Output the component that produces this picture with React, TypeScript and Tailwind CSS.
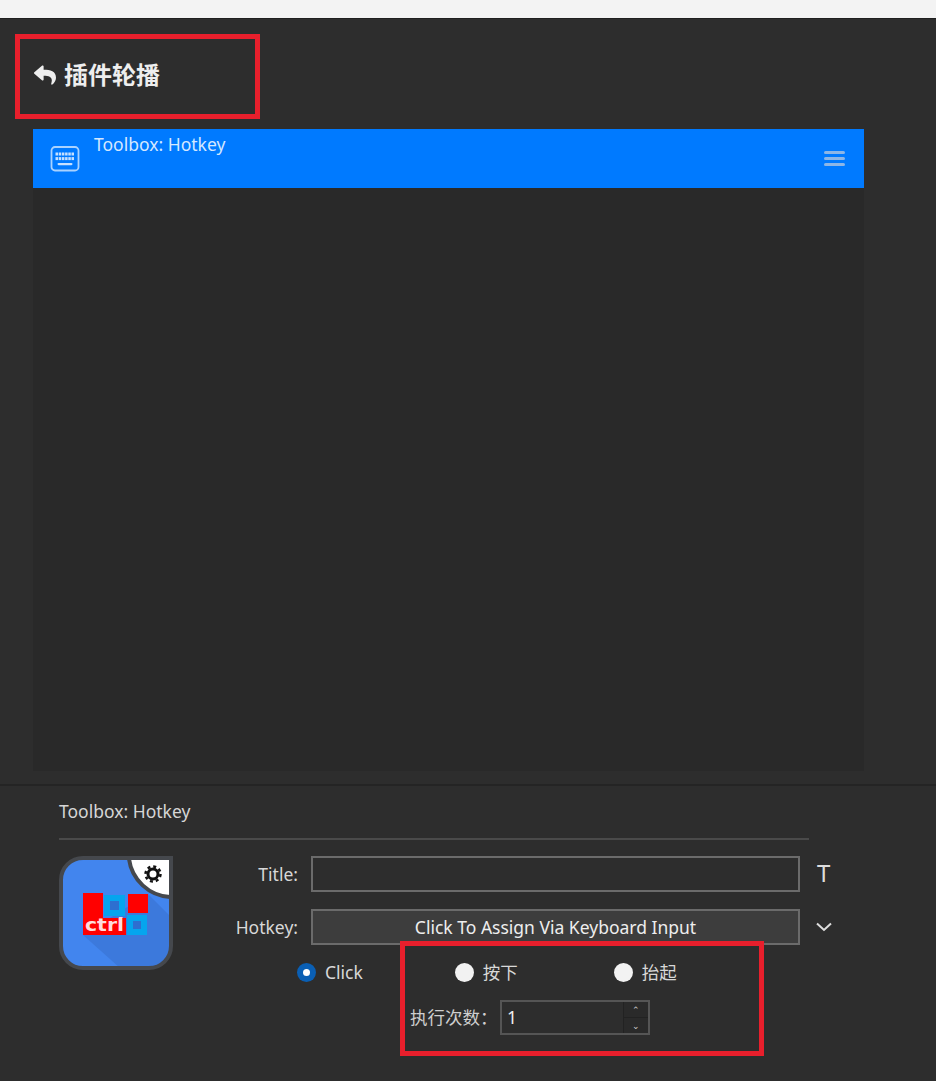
import { FaReply } from "react-icons/fa";

const font = "font-['Noto_Sans','Noto_Sans_CJK_SC',sans-serif]";

const tileOutline = "M24 2 H112 V90 A22 22 0 0 1 90 112 H24 A22 22 0 0 1 2 90 V24 A22 22 0 0 1 24 2 Z";

function KeyboardIcon() {
  const keys = [];
  for (let r = 0; r < 2; r++) {
    for (let c = 0; c < 6; c++) {
      keys.push(<rect key={`${r}-${c}`} x={5.5 + c * 3.2} y={8.5 + r * 4.6} width="2.5" height="3" fill="#c6e0ff" />);
    }
  }
  return (
    <svg width="30" height="30" viewBox="0 0 30 30" fill="none">
      <rect x="1.5" y="3" width="27" height="23.5" rx="3.5" stroke="#a9d2ff" strokeWidth="1.8" />
      {keys}
      <rect x="7.5" y="19" width="15" height="2.2" rx="1.1" fill="#c6e0ff" />
    </svg>
  );
}

function PluginIcon() {
  return (
    <svg width="114" height="114" viewBox="0 0 114 114">
      <defs>
        <clipPath id="tile">
          <path d={tileOutline} />
        </clipPath>
      </defs>
      <g clipPath="url(#tile)">
        <rect width="114" height="114" fill="#4285ee" />
        <path d="M24 79 L61 112 L112 112 L112 61 L89 38 Z" fill="#3c79dc" />
        <path d="M24 37 H44 V62 H67 V79 H24 Z" fill="#ff0000" />
        <rect x="45" y="39" width="21" height="21" fill="#05a5ee" />
        <rect x="51" y="45" width="9" height="9" fill="#2d6fd0" />
        <rect x="69" y="38" width="20" height="19" fill="#ff0000" />
        <rect x="68" y="59" width="20" height="20" fill="#05a5ee" />
        <rect x="74" y="65" width="8" height="8" fill="#2d6fd0" />
        <text x="26" y="75" fontFamily="'DejaVu Sans', sans-serif" fontWeight="bold" fontSize="18" textLength="39" lengthAdjust="spacingAndGlyphs" fill="#ffdcdc">
          ctrl
        </text>
      </g>
      <path d="M70 3 A44 44 0 0 0 111 41 V3 Z" fill="#ffffff" />
      <path d="M70 3 A44 44 0 0 0 111 41" fill="none" stroke="#45484d" strokeWidth="4" />
      <path d={tileOutline} fill="none" stroke="#45484d" strokeWidth="4" />
      <g transform="translate(94 18)" fill="none" stroke="#111111">
        <circle r="5" strokeWidth="3" />
        <circle r="7.500" strokeWidth="2.500" strokeDasharray="3 2.890" />
      </g>
    </svg>
  );
}

function Radio({ checked, label, className }: { checked?: boolean; label: string; className: string }) {
  return (
    <div className={`flex items-center gap-[9px] ${className}`}>
      {checked ? (
        <span className="flex h-[19px] w-[19px] items-center justify-center rounded-full bg-[#0a5fb4]">
          <span className="h-[7px] w-[7px] rounded-full bg-white" />
        </span>
      ) : (
        <span className="h-[19px] w-[19px] rounded-full bg-[#f2f2f2]" />
      )}
      <span className="text-[17.5px] leading-[24px] text-[#d8d8d8]">{label}</span>
    </div>
  );
}

export default function App() {
  return (
    <div className={`relative flex h-[1081px] w-[936px] flex-col overflow-hidden bg-[#2d2d2d] ${font}`}>
      <div className="h-[18px] shrink-0 bg-[#f3f3f3]" />
      <div className="h-px shrink-0 bg-[#1f1f1f]" />

      {/* Title */}
      <div className="flex h-[110px] shrink-0 items-center gap-[8px] pl-[34px] pt-[2px]">
        <FaReply className="text-[22px] text-[#eeeeee]" />
        <span className="text-[24px] font-bold text-[#eeeeee]">插件轮播</span>
      </div>

      {/* Action list */}
      <div className="ml-[33px] h-[642px] w-[831px] shrink-0 bg-[#292929]">
        <div className="flex h-[59px] items-start bg-[#007aff] pl-[17px] pr-[19px]">
          <div className="mt-[15px]">
            <KeyboardIcon />
          </div>
          <span className="ml-[14px] mt-[2px] text-[17.5px] leading-[26px] text-[#d4e8ff]">Toolbox: Hotkey</span>
          <div className="ml-auto mt-[22px] flex w-[21px] flex-col gap-[3px]">
            <span className="h-[3px] rounded-sm bg-[#8db6e6]" />
            <span className="h-[3px] rounded-sm bg-[#8db6e6]" />
            <span className="h-[3px] rounded-sm bg-[#8db6e6]" />
          </div>
        </div>
      </div>

      {/* Settings panel */}
      <div className="mt-[13px] flex-1 border-t-2 border-[#242424] pl-[59px]">
        <div className="flex h-[54px] w-[750px] items-center border-b-2 border-[#4a4a4a] pb-[2px] text-[17.5px] text-[#d6d6d6]">
          Toolbox: Hotkey
        </div>
        <div className="mt-[16px] flex">
          <PluginIcon />
          <div className="ml-[58px] flex w-[600px] flex-col">
            <div className="flex items-center">
              <span className="flex w-[67px] shrink-0 justify-end whitespace-nowrap text-[17.5px] text-[#d8d8d8]">Title:</span>
              <div className="ml-[13px] h-[36px] w-[489px] shrink-0 border-2 border-[#6b6b6b]" />
              <span className="ml-[17px] pb-[2px] text-[24px] leading-none text-[#dddddd]">T</span>
            </div>
            <div className="mt-[17px] flex items-center">
              <span className="flex w-[67px] shrink-0 justify-end whitespace-nowrap text-[17.5px] text-[#d8d8d8]">Hotkey:</span>
              <div className="ml-[13px] flex h-[36px] w-[489px] shrink-0 items-center justify-center border-2 border-[#6b6b6b] bg-[#3d3d3d] text-[17.5px] text-[#eeeeee]">
                Click To Assign Via Keyboard Input
              </div>
              <svg className="ml-[15px] shrink-0" width="18" height="12" viewBox="0 0 18 12" fill="none">
                <path d="M2 2.500 L9 9 L16 2.500" stroke="#dddddd" strokeWidth="2" />
              </svg>
            </div>
            <div className="mt-[15px] flex h-[24px] items-center">
              <Radio checked label="Click" className="ml-[66px]" />
              <Radio label="按下" className="ml-[92px]" />
              <Radio label="抬起" className="ml-[96px]" />
            </div>
            <div className="mt-[16px] flex items-center">
              <span className="ml-[179px] w-[90px] shrink-0 whitespace-nowrap text-[17.5px] text-[#cfcfcf]">执行次数：</span>
              <div className="flex h-[35px] w-[150px] shrink-0 items-center justify-between border-2 border-[#555555] pl-[5px] text-[17.5px] text-[#eeeeee]">
                1
                <div className="flex h-full w-[25px] flex-col border-l border-[#222222] bg-[#2a2a2a] text-center text-[9px] leading-[15px] text-[#cccccc]">
                  <span className="h-1/2 border-b border-[#222222]">⌃</span>
                  <span className="h-1/2">⌄</span>
                </div>
              </div>
            </div>
          </div>
        </div>
      </div>

      {/* Red annotation boxes */}
      <div className="absolute left-[15px] top-[34px] h-[85px] w-[245px] border-[5px] border-[#e81f2c]" />
      <div className="absolute left-[400px] top-[941px] h-[115px] w-[364px] border-[5px] border-[#e81f2c]" />
    </div>
  );
}
